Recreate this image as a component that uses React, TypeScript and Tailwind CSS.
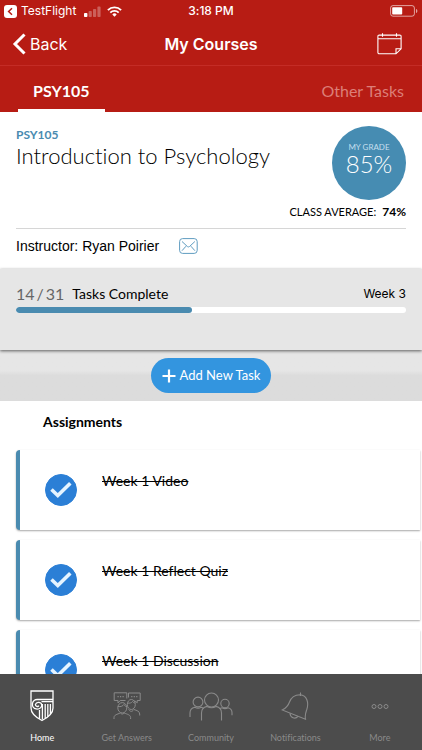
import type { ReactNode } from 'react'

const tasks = [
  { id: 'video', title: 'Week 1 Video', done: true },
  { id: 'quiz', title: 'Week 1 Reflect Quiz', done: true },
  { id: 'discussion', title: 'Week 1 Discussion', done: true },
]

const completed = 14
const total = 31

const StatusBar = () => (
  <div className="grid grid-cols-3 items-center h-[22px] px-1 font-['Inter',sans-serif] text-xs">
    <div className="flex items-center gap-1">
      <svg width="13" height="13" viewBox="0 0 13 13">
        <rect width="13" height="13" rx="3" fill="#fff" />
        <path d="M8 3.2 4.6 6.5 8 9.8" fill="none" stroke="#b71c14" strokeWidth="1.5" />
      </svg>
      <span>TestFlight</span>
      <svg className="ml-1" width="17" height="11" viewBox="0 0 17 11" fill="#fff">
        <rect y="7" width="3.4" height="4" rx="0.8" />
        <rect x="4.6" y="5" width="3.2" height="6" rx="0.8" opacity="0.3" />
        <rect x="9" y="3" width="3.2" height="8" rx="0.8" opacity="0.3" />
        <rect x="13.4" y="0.6" width="3.2" height="10.4" rx="0.8" opacity="0.3" />
      </svg>
      <svg className="ml-0.5" width="15" height="11" viewBox="0 0 15 11" fill="none" stroke="#fff" strokeWidth="1.9">
        <path d="M0.9 4.1a9.4 9.4 0 0 1 13.2 0" />
        <path d="M3.3 6.6a6 6 0 0 1 8.4 0" />
        <path d="M5.3 8.4a3.1 3.1 0 0 1 4.4 0L7.5 10.7z" fill="#fff" stroke="none" />
      </svg>
    </div>
    <span className="text-center font-medium">3:18 PM</span>
    <svg className="justify-self-end" width="28" height="12" viewBox="0 0 28 12">
      <rect x="0.6" y="0.6" width="23.8" height="10.6" rx="2.4" fill="none" stroke="#fff" strokeOpacity="0.6" />
      <rect x="2.2" y="2.2" width="10" height="7.4" rx="0.8" fill="#fff" />
      <path d="M26 4v4c1-.4 1.4-1.2 1.4-2S27 4.4 26 4z" fill="#fff" opacity="0.6" />
    </svg>
  </div>
)

const HomeIcon = () => (
  <svg width="24" height="32" viewBox="0 0 24 32" fill="none" stroke="currentColor" strokeWidth="1.3">
    <path d="M1 1h22v17c0 6-5 9.5-11 12.5C6 27.5 1 24 1 18z" />
    <path d="M23 9.5H7.5a4.8 4.8 0 1 0 4.3 6.2 3.3 3.3 0 0 0-6.4-1.2 1.9 1.9 0 0 0 3.5 1.1" />
    <path d="M11.5 11.6H23M9.5 20v8.8M12.4 14v15.5M15.2 14v14M17.8 14v12.5M20.4 14v10" />
  </svg>
)

const AnswersIcon = () => (
  <svg width="28" height="28" viewBox="0 0 28 28" fill="none" stroke="currentColor">
    <path d="M12.5 8.5H7.2L5 11V8.5H1.2V.8h12.6v5.7" />
    <path d="M15.5 5.5V1h11.7v7.5h-3v2.3L21.5 8.5" />
    <path d="M4.5 4.6h1.2M7 4.6h1.2M9.5 4.6h1.2M18.2 4.6h1.2M20.7 4.6h1.2M23.2 4.6h1.2" strokeWidth="1.3" />
    <ellipse cx="9.3" cy="15.8" rx="4.5" ry="5.2" />
    <path d="M4.9 14.5c3 .6 5-.6 6-2 .6 1.2 1.6 1.9 2.9 2" />
    <ellipse cx="18.3" cy="12.5" rx="4" ry="5" />
    <path d="M14.5 11c2.5.5 4-.2 5-1.5.7 1 1.5 1.4 2.7 1.5" />
    <path d="M1 27v-1.5c0-2.5 3-3.2 6.5-4.5 1 1.4 2.6 1.4 3.6 0 3.5 1.3 6.500 2 6.500 4.500V27M15.500 17.500l1 .9c1 1.300 2.600 1.300 3.600 0l.8-.9c3 1 5.800 1.800 5.800 4.500v1.500" />
  </svg>
)

const CommunityIcon = () => (
  <svg width="44" height="29" viewBox="0 0 44 29" fill="none" stroke="currentColor" strokeWidth="1.1">
    <circle cx="9" cy="10" r="4.9" />
    <circle cx="22.5" cy="8" r="7" />
    <circle cx="36" cy="11.5" r="4.2" />
    <path d="M1 25v-4c0-3.5 1.8-5.2 4.8-5.8 2 1.2 4.4 1.2 6.4 0 1 .2 1.9.6 2.6 1.2" />
    <path d="M12.5 28.5V21c0-3.5 2-5.8 5.5-6.6 2.8 1.6 6.2 1.6 9 0 3.500.8 5.500 3.100 5.500 6.600v7.500" />
    <path d="M30.5 16.8c.7-.5 1.5-.8 2.5-1 1.9 1 4.1 1 6 0 2.5.6 4 2.2 4 5v2.5" />
  </svg>
)

const BellIcon = () => (
  <svg width="28" height="28" viewBox="0 0 28 28" fill="none" stroke="currentColor" strokeWidth="1.1">
    <path d="M19.5.5V4" />
    <path d="M19 2.8c-6 .2-9 3.2-10.5 7.2C7 14.5 5 16 1.2 18l23.3 9.2c-.9-4 0-6 1.3-9.7C28 10.5 26 3.3 19 2.8z" />
    <path d="M9 21.2c.2 4.5 5.2 6.5 8 3.2" />
  </svg>
)

const MoreIcon = () => (
  <svg width="18" height="28" viewBox="0 0 18 28" fill="none" stroke="currentColor">
    <circle cx="3" cy="14.5" r="2" />
    <circle cx="9" cy="14.5" r="2" />
    <circle cx="15" cy="14.5" r="2" />
  </svg>
)

const TabItem = ({ icon, label, active }: { icon: ReactNode; label: string; active?: boolean }) => (
  <a href="#" className={active ? 'flex-1 text-white' : 'flex-1 text-[#8a8a8a]'}>
    <span className="flex h-8 items-center justify-center">{icon}</span>
    <span className="mt-2 block text-center text-[9px] leading-4">{label}</span>
  </a>
)

const TaskCard = ({ id, title, done }: { id: string; title: string; done: boolean }) => (
  <li className="flex h-20 items-center rounded-l-sm border-l-4 border-[#4a8bb0] bg-white pl-[25px] shadow-[0_1px_2px_rgba(0,0,0,0.35)]">
    <span className="grid size-8 place-items-center">
      <input
        id={id}
        type="checkbox"
        defaultChecked={done}
        className="peer col-start-1 row-start-1 size-8 appearance-none rounded-full border border-[#2b7fd6] checked:bg-[#2b7fd6]"
      />
      <svg
        className="pointer-events-none col-start-1 row-start-1 hidden peer-checked:block"
        width="24"
        height="20"
        viewBox="0 0 24 20"
        fill="none"
        stroke="#e6f4ff"
        strokeWidth="3.6"
      >
        <path d="M2.5 9.5 8.8 15.6 21.3 3.2" />
      </svg>
    </span>
    <label htmlFor={id} className="mb-[18px] ml-[25px] text-sm text-black line-through">
      {title}
    </label>
  </li>
)

const App = () => {
  return (
    <div className="flex h-screen flex-col bg-white font-['Lato',sans-serif] text-black [font-variant-ligatures:none]">
      <header className="bg-[#b71c14] text-white">
        <StatusBar />

        <div className="grid h-11 grid-cols-[1fr_auto_1fr] items-center border-b border-[#c42c26] px-3 font-['Inter',sans-serif]">
          <button className="flex items-center gap-1 text-base">
            <svg width="14" height="22" viewBox="0 0 14 22" fill="none" stroke="#fff" strokeWidth="3">
              <path d="M12.5 1.5 3 11l9.5 9.5" />
            </svg>
            Back
          </button>
          <h1 className="text-base font-semibold">My Courses</h1>
          <button className="justify-self-end pr-2" aria-label="Calendar">
            <svg width="25" height="22" viewBox="0 0 25 22" fill="none" stroke="#fff" strokeWidth="1.1">
              <path d="M19 20.8H2.2a1.3 1.3 0 0 1-1.3-1.3V3.4a1.3 1.3 0 0 1 1.3-1.3h20.6a1.3 1.3 0 0 1 1.3 1.3v12.4zM19 20.8v-5h5.1M.9 5.8h23.2M5.5.3v3.5M19.5.3v3.5" />
            </svg>
          </button>
        </div>

        <nav className="flex justify-between px-[18px]">
          <a href="#" className="border-b-[3px] border-white px-[15px] pt-[15px] pb-2 text-base leading-5 font-bold">
            PSY105
          </a>
          <a href="#" className="pt-[15px] text-base leading-5 text-[#dc7f78]">
            Other Tasks
          </a>
        </nav>
      </header>

      <main className="flex-1 overflow-y-auto [scrollbar-width:none]">
        <section className="px-4">
          <div className="flex justify-between border-b border-[#d6d6d6] pt-3.5 pb-2">
            <div>
              <p className="pt-px text-xs leading-4 font-bold text-[#4a8bb0]">PSY105</p>
              <h2 className="text-[22px] leading-[26px] font-light">Introduction to Psychology</h2>
            </div>
            <div className="flex flex-col items-end">
              <div className="flex size-[74px] flex-col items-center rounded-full bg-[#468cb2] pt-4 text-white">
                <span className="text-[8px] leading-[10px] text-[#c5dfee]">MY GRADE</span>
                <span className="text-2xl leading-6 font-light">85%</span>
              </div>
              <p className="mt-1 flex gap-1.5 text-[11px] leading-4">
                CLASS AVERAGE: <span className="text-xs font-bold">74%</span>
              </p>
            </div>
          </div>

          <div className="flex h-10 items-center gap-5 pb-1.5 font-['Liberation_Sans',sans-serif] text-sm">
            <span>Instructor: Ryan Poirier</span>
            <button aria-label="Email instructor">
              <svg width="19" height="16" viewBox="0 0 19 16" fill="none" stroke="#5f9cc0">
                <rect x="0.6" y="0.6" width="17.6" height="14.8" rx="3" />
                <path d="M3 3.5l5.4 5c.6.6 1.5.6 2.1 0l5.4-5M3 12.7l4-4.5M15.9 12.7l-4-4.5" />
              </svg>
            </button>
          </div>
        </section>

        <section className="relative bg-[#e6e6e6] px-4 pt-[15px] pb-[37px] shadow-[0_1px_3px_rgba(0,0,0,0.6)]">
          <div className="flex items-center">
            <span className="flex gap-0.5 text-base leading-5 text-[#666]">
              <span>{completed}</span>
              <span>/</span>
              <span>{total}</span>
            </span>
            <span className="ml-2 text-sm leading-5">Tasks Complete</span>
            <span className="ml-auto font-['Inter',sans-serif] text-xs leading-5">Week 3</span>
          </div>
          <div className="mt-[3px] h-1.5 overflow-hidden rounded-full bg-white">
            <div className="h-full rounded-full bg-[#4a8bb0]" style={{ width: `${(completed / total) * 100}%` }} />
          </div>
        </section>

        <div className="flex justify-center bg-linear-to-b from-[#e6e6e6] from-40% to-[#dcdcdc] to-50% pt-2 pb-2">
          <button className="flex h-[35px] items-center gap-1 rounded-full bg-[#3395df] px-[11px] text-[13px] text-white">
            <svg width="14" height="14" viewBox="0 0 14 14" stroke="#fff" strokeWidth="2.2">
              <path d="M7 .5v13M.5 7h13" />
            </svg>
            Add New Task
          </button>
        </div>

        <section>
          <h3 className="pt-[11px] pb-[18px] pl-[43px] text-sm leading-5 font-bold">Assignments</h3>
          <ul className="flex flex-col gap-2.5 pr-0.5 pb-4 pl-4">
            {tasks.map((task) => (
              <TaskCard key={task.id} {...task} />
            ))}
          </ul>
        </section>
      </main>

      <footer className="flex h-[76px] items-start bg-[#4c4c4c] pt-4">
        <TabItem icon={<HomeIcon />} label="Home" active />
        <TabItem icon={<AnswersIcon />} label="Get Answers" />
        <TabItem icon={<CommunityIcon />} label="Community" />
        <TabItem icon={<BellIcon />} label="Notifications" />
        <TabItem icon={<MoreIcon />} label="More" />
      </footer>
    </div>
  )
}

export default App
